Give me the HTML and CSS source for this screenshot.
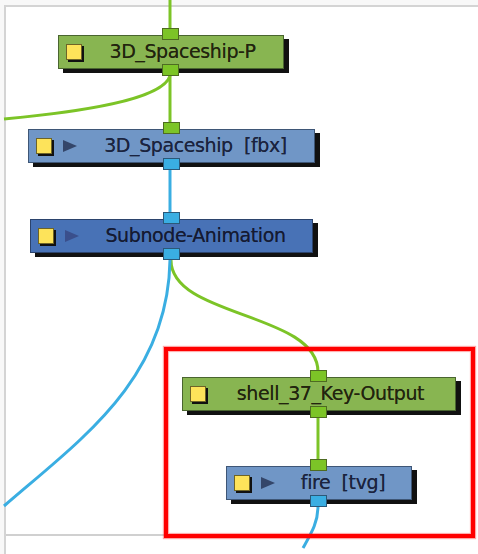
FILE: index.html
```html
<!DOCTYPE html>
<html lang="en">
<head>
    <meta charset="UTF-8">
    <meta name="viewport" content="width=device-width, initial-scale=1.0">
    <title>Node View</title>
    <link rel="stylesheet" href="styles.css">
</head>
<body>
    <div class="view">
        <div class="frame"></div>
        <div class="frame-edge"></div>

        <!-- connections between the nodes -->
        <svg class="wires" width="478" height="554" viewBox="0 0 478 554">
            <path class="wire green" d="M170 0 V30"/>
            <path class="wire green" d="M170 76 V124"/>
            <path class="wire green" d="M170 76 C 162 100, 80 112, 4 119"/>
            <path class="wire blue" d="M170 170 V214"/>
            <path class="wire green" d="M171 260 C 171 318, 318 312, 318 372"/>
            <path class="wire blue" d="M170 260 C 168 380, 80 440, 4 506"/>
            <path class="wire green" d="M318 418 V460"/>
            <path class="wire blue" d="M318 506 C 318 522, 312 532, 303 548"/>
        </svg>

        <div class="node green n1">
            <span class="port in"></span>
            <span class="chip"></span>
            <span class="label">3D_Spaceship-P</span>
            <span class="port out"></span>
        </div>

        <div class="node blue n2">
            <span class="port in green"></span>
            <span class="chip"></span>
            <span class="play"></span>
            <span class="label">3D_Spaceship&nbsp; [fbx]</span>
            <span class="port out"></span>
        </div>

        <div class="node dark n3">
            <span class="port in"></span>
            <span class="chip"></span>
            <span class="play"></span>
            <span class="label">Subnode-Animation</span>
            <span class="port out"></span>
        </div>

        <div class="node green n4">
            <span class="port in"></span>
            <span class="chip"></span>
            <span class="label">shell_37_Key-Output</span>
            <span class="port out"></span>
        </div>

        <div class="node blue n5">
            <span class="port in green"></span>
            <span class="chip"></span>
            <span class="play"></span>
            <span class="label">fire&nbsp; [tvg]</span>
            <span class="port out"></span>
        </div>

        <div class="selection"></div>
    </div>
</body>
</html>
```

FILE: styles.css
```css
body {
    margin: 0;
    background-color: #f8f8f8;
    font-family: "DejaVu Sans", Verdana, sans-serif;
}

.view {
    position: relative;
    width: 478px;
    height: 554px;
    overflow: hidden;
}

.frame {
    position: absolute;
    left: 4px;
    top: 5px;
    right: 0;
    bottom: 0;
    background-color: #ffffff;
    border-top: 2px solid #d4d4d4;
    border-left: 2px solid #d4d4d4;
}

.frame-edge {
    position: absolute;
    left: 6px;
    top: 534px;
    width: 300px;
    height: 2px;
    background-color: #d0d0d0;
}

.wires {
    position: absolute;
    left: 0;
    top: 0;
}

.wire {
    fill: none;
    stroke-width: 3;
}

.wire.green {
    stroke: #7cc427;
}

.wire.blue {
    stroke: #3aaee2;
}

/* nodes */
.node {
    position: absolute;
    box-sizing: border-box;
    height: 34px;
    display: flex;
    align-items: center;
    padding-left: 7px;
    border: 1px solid #4a6530;
    box-shadow: 5px 4px 0 #111111;
    color: #22240e;
    font-size: 19px;
    letter-spacing: -0.4px;
    text-shadow: 0 0 0.6px rgba(20, 20, 10, 0.7);
}

.node.green {
    background-color: #88b551;
}

.node.blue {
    background-color: #7096c6;
    border-color: #3e5676;
    color: #1a2340;
}

.node.dark {
    background-color: #4872b6;
    border-color: #2b436c;
    color: #141a34;
}

.n1 { left: 58px;  top: 35px;  width: 226px; }
.n2 { left: 28px;  top: 129px; width: 287px; }
.n3 { left: 30px;  top: 219px; width: 283px; }
.n4 { left: 182px; top: 377px; width: 274px; }
.n5 { left: 226px; top: 466px; width: 186px; }

.chip {
    width: 14px;
    height: 14px;
    flex: none;
    background-color: #fde35a;
    border: 1px solid #6e6426;
    box-shadow: 2px 2px 0 #111111;
    margin-top: -1px;
}

.play {
    width: 0;
    height: 0;
    flex: none;
    margin-left: 11px;
    border-top: 6px solid transparent;
    border-bottom: 6px solid transparent;
    border-left: 14px solid #34466a;
}

.node.dark .play {
    border-left-color: #3a4f8c;
}

.label {
    flex: 1;
    text-align: center;
    white-space: nowrap;
    padding-bottom: 2px;
}

.port {
    position: absolute;
    left: 50%;
    width: 17px;
    height: 12px;
    margin-left: -9px;
    box-sizing: border-box;
    background-color: #7cc427;
    border: 1px solid #4e6b22;
}

.port.in {
    top: -8px;
}

.port.out {
    bottom: -8px;
}

.node.blue .port,
.node.dark .port {
    background-color: #3aaee2;
    border-color: #2b5878;
}

.node .port.green {
    background-color: #7cc427;
    border-color: #4e6b22;
}

.selection {
    position: absolute;
    left: 164px;
    top: 347px;
    width: 311px;
    height: 191px;
    box-sizing: border-box;
    border: 4px solid #ff0000;
    box-shadow: 0 0 1px 1px rgba(255, 0, 0, 0.35), inset 0 0 1px 1px rgba(255, 0, 0, 0.35);
}
```
